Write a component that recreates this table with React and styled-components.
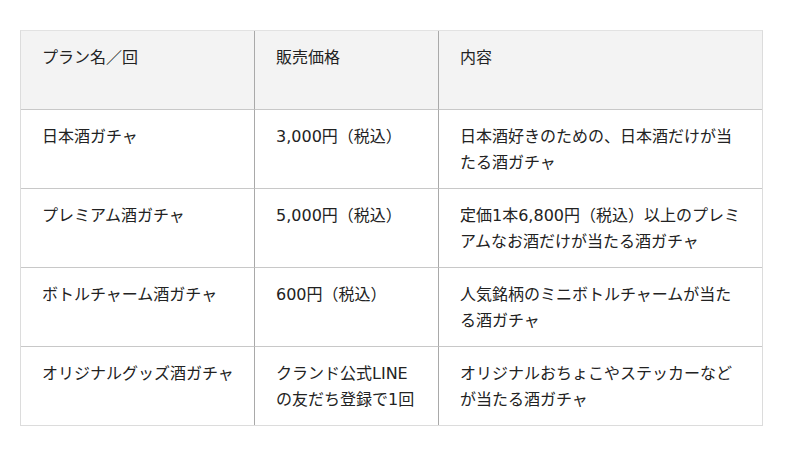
import React from 'react';
import styled, {createGlobalStyle} from "styled-components";

const rows = [
    {name: '日本酒ガチャ', price: ['3,000円（税込）'], desc: ['日本酒好きのための、日本酒だけが当', 'たる酒ガチャ']},
    {name: 'プレミアム酒ガチャ', price: ['5,000円（税込）'], desc: ['定価1本6,800円（税込）以上のプレミ', 'アムなお酒だけが当たる酒ガチャ']},
    {name: 'ボトルチャーム酒ガチャ', price: ['600円（税込）'], desc: ['人気銘柄のミニボトルチャームが当た', 'る酒ガチャ']},
    {name: 'オリジナルグッズ酒ガチャ', price: ['クランド公式LINE', 'の友だち登録で1回'], desc: ['オリジナルおちょこやステッカーなど', 'が当たる酒ガチャ']},
];

const Global = createGlobalStyle`
  body {
    margin: 0;
    background: #fff;
    font-family: "DejaVu Sans", "Noto Sans CJK JP", sans-serif;
    color: #222;
  }
`;

const Page = styled.div`
  padding: 30px 0 0 20px;
`;

const Table = styled.div`
  display: grid;
  grid-template-columns: 233px 184px 324px;
  grid-template-rows: 78px repeat(4, 79px);
  width: max-content;
  border: 1px solid #dcdcdc;
  border-top-color: #e2e2e2;
`;

const Cell = styled.div`
  box-sizing: border-box;
  padding: 14px 20px 0 21px;
  font-size: 16px;
  line-height: 26px;
  background: ${p => p.head ? '#f3f3f3' : '#fff'};
  border-top: ${p => p.first ? 'none' : '1px solid #c8c8c8'};
  border-left: ${p => p.col === 0 ? 'none' : '1px solid #a9a9a9'};
  white-space: nowrap;
`;

const Line = styled.div``;

const App = () => {
    return <Page>
        <Global/>
        <Table>
            <Cell head first col={0}>プラン名／回</Cell>
            <Cell head first col={1}>販売価格</Cell>
            <Cell head first col={2}>内容</Cell>
            {rows.map(r => <React.Fragment key={r.name}>
                <Cell col={0}>{r.name}</Cell>
                <Cell col={1}>{r.price.map(t => <Line key={t}>{t}</Line>)}</Cell>
                <Cell col={2}>{r.desc.map(t => <Line key={t}>{t}</Line>)}</Cell>
            </React.Fragment>)}
        </Table>
    </Page>;
};

export default App;
